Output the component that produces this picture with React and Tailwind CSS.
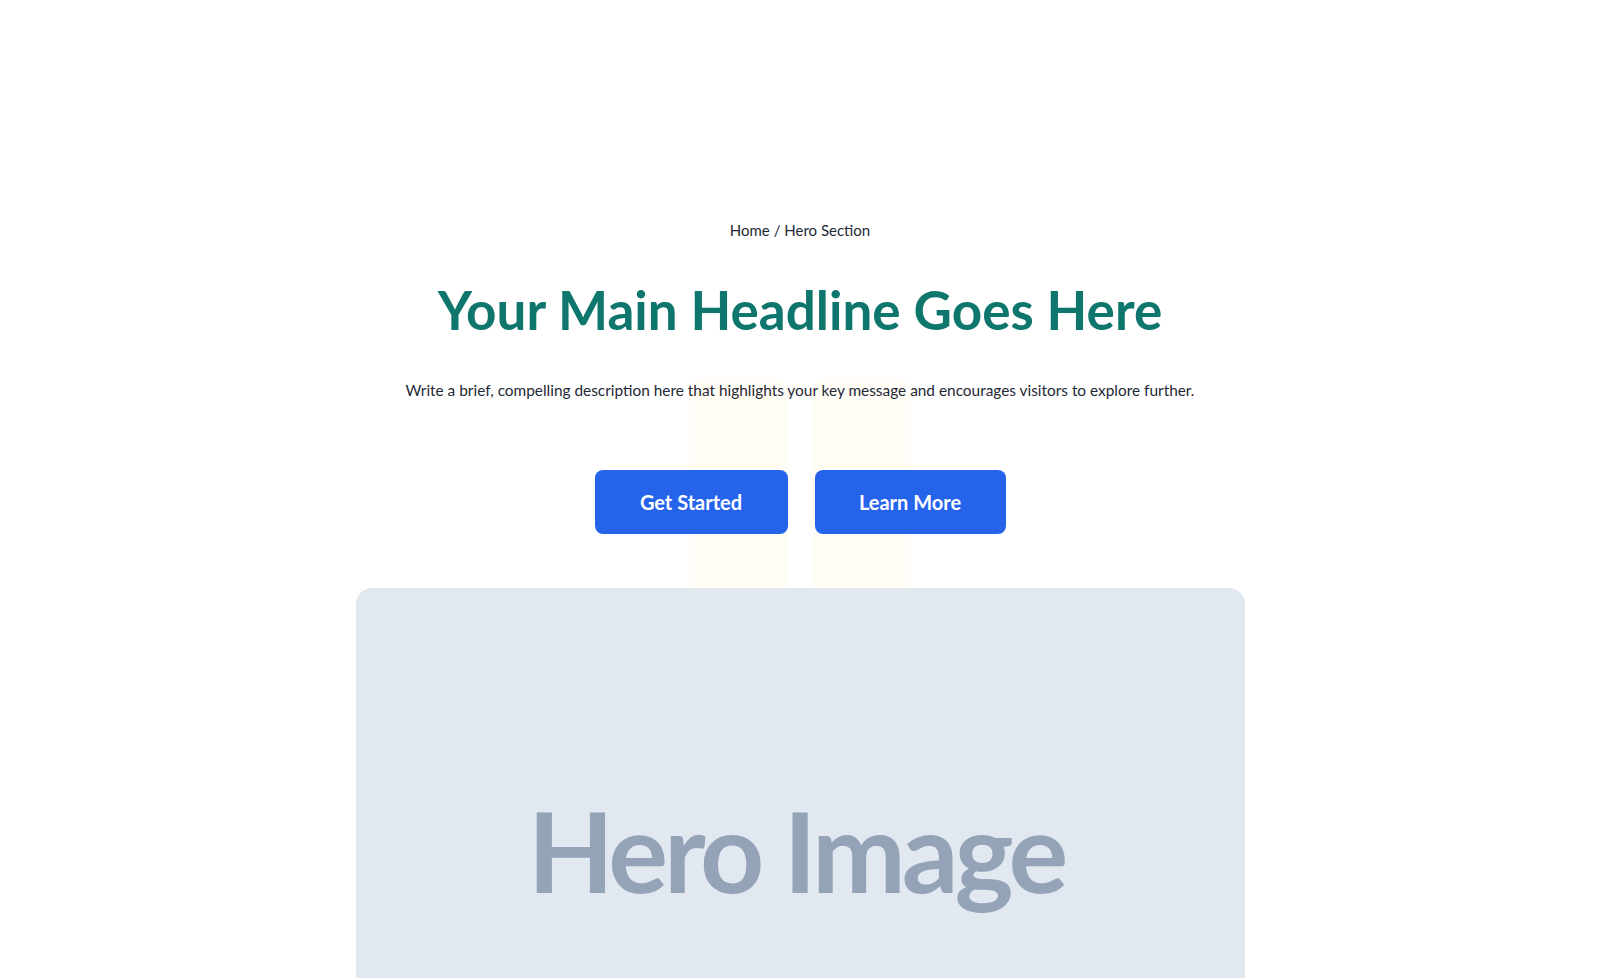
const Hero = () => {
  return (
    <section className="relative flex flex-col items-center bg-white pt-[218px] font-['Lato',sans-serif] overflow-hidden h-[978px]">
      {/* soft cream columns sitting behind the call to action */}
      <div className="absolute left-1/2 top-[377px] flex -translate-x-1/2 gap-6">
        <div className="h-[240px] w-[99px] rounded-2xl bg-[#fffdf6]"></div>
        <div className="h-[240px] w-[98px] rounded-2xl bg-[#fffdf6]"></div>
      </div>

      <nav className="relative text-[15px] leading-6 text-[#1f2937]">Home / Hero Section</nav>

      <h1 className="relative mt-[36px] text-[53px] font-bold leading-[64px] text-[#0f766e]">
        Your Main Headline Goes Here
      </h1>

      <p className="relative mt-[36px] text-[15.4px] leading-6 text-[#1f2937]">
        Write a brief, compelling description here that highlights your key message and encourages visitors to explore
        further.
      </p>

      <div className="relative mt-[68px] flex gap-[27px]">
        <button className="h-16 w-[193px] rounded-lg bg-[#2563eb] text-[20px] font-bold text-white">Get Started</button>
        <button className="h-16 w-[191px] rounded-lg bg-[#2563eb] text-[20px] font-bold text-white">Learn More</button>
      </div>

      <div className="relative mt-[54px] flex h-[524px] w-[889px] shrink-0 items-center justify-center rounded-2xl bg-[#e2e8f0] pr-2">
        <span className="text-[112px] font-bold tracking-[-0.036em] text-[#94a3b8]">Hero Image</span>
      </div>
    </section>
  )
}

export default function App() {
  return <Hero />
}
